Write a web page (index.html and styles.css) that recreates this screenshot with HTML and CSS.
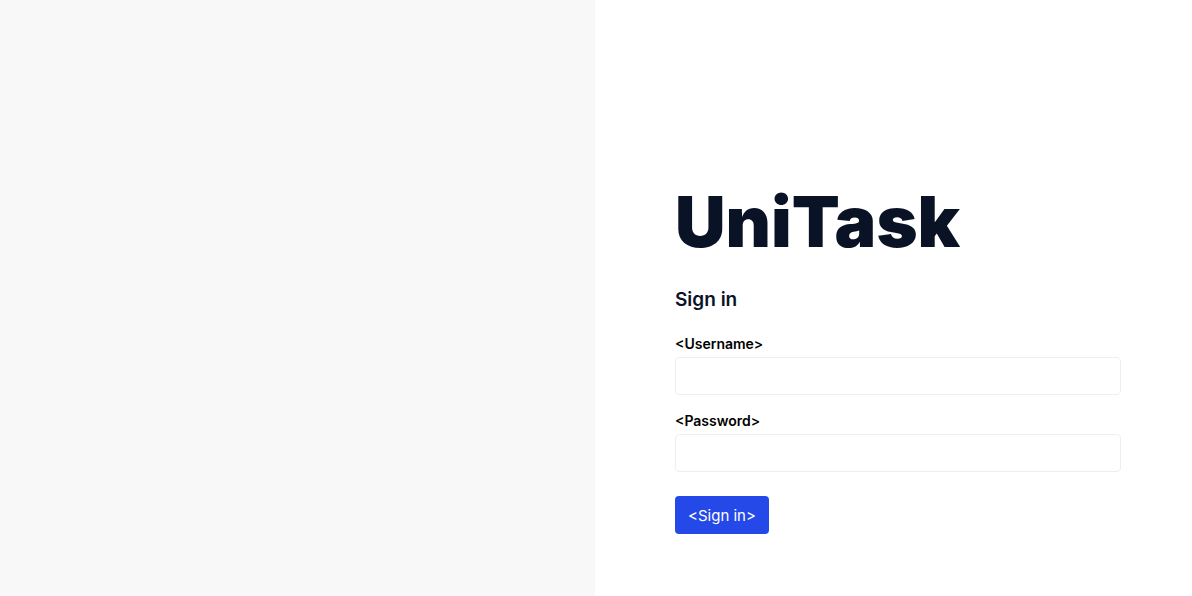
FILE: index.html
```html
<!DOCTYPE html>
<html lang="en">
<head>
<meta charset="utf-8">
<meta name="viewport" content="width=device-width, initial-scale=1">
<title>UniTask</title>
<link rel="stylesheet" href="styles.css">
</head>
<body>
<div class="layout">
  <aside class="cover"></aside>
  <main class="panel">
    <h1 class="brand">UniTask</h1>
    <h2 class="heading">Sign in</h2>
    <form class="form">
      <div class="field">
        <label class="label" for="username">&lt;Username&gt;</label>
        <input class="input" id="username" type="text">
      </div>
      <div class="field">
        <label class="label" for="password">&lt;Password&gt;</label>
        <input class="input" id="password" type="password">
      </div>
      <button class="button" type="button">&lt;Sign in&gt;</button>
    </form>
  </main>
</div>
</body>
</html>
```

FILE: styles.css
```css
* { box-sizing: border-box; }
body {
  margin: 0;
  font-family: Inter, "Open Sans", sans-serif;
  color: #000;
  background: #fff;
}
.layout {
  display: grid;
  grid-template-columns: 595fr 597fr;
  min-height: 100vh;
}
.cover { background: #f8f8f8; }
.panel {
  display: flex;
  flex-direction: column;
  justify-content: flex-end;
  padding: 60px 71px 62px 80px;
}
.brand {
  margin: 0 0 16px;
  font-size: 70px;
  line-height: 96px;
  font-weight: 900;
  color: #0a1326;
}
.heading {
  margin: 0 0 20px;
  font-size: 19px;
  line-height: 28px;
  font-weight: 600;
  color: #0a1326;
}
.form {
  display: flex;
  flex-direction: column;
  align-items: flex-start;
}
.field { width: 100%; margin-bottom: 16px; }
.label {
  display: block;
  margin-bottom: 3px;
  font-size: 14px;
  line-height: 20px;
  font-weight: 600;
}
.input {
  display: block;
  width: 100%;
  height: 38px;
  padding: 8px 12px;
  border: 1px solid #eeeeee;
  border-radius: 4px;
  font: inherit;
  background: #fff;
}
.button {
  height: 38px;
  margin-top: 8px;
  padding: 0 13px;
  border: 0;
  border-radius: 4px;
  font: inherit;
  font-size: 15px;
  color: #fff;
  background: #2549e8;
}
```
